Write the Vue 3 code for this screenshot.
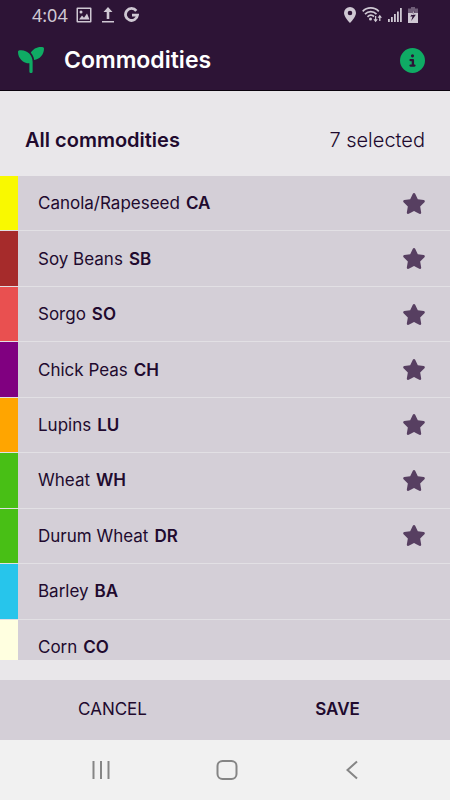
<script setup>
import { ref, computed } from 'vue'

const commodities = ref([
  { name: 'Canola/Rapeseed', code: 'CA', color: '#f9f900', selected: true },
  { name: 'Soy Beans', code: 'SB', color: '#a62b2b', selected: true },
  { name: 'Sorgo', code: 'SO', color: '#e95050', selected: true },
  { name: 'Chick Peas', code: 'CH', color: '#800080', selected: true },
  { name: 'Lupins', code: 'LU', color: '#ffa500', selected: true },
  { name: 'Wheat', code: 'WH', color: '#48bf15', selected: true },
  { name: 'Durum Wheat', code: 'DR', color: '#48bf15', selected: true },
  { name: 'Barley', code: 'BA', color: '#27c5eb', selected: false },
  { name: 'Corn', code: 'CO', color: '#ffffe0', selected: false },
])

const selectedCount = computed(() => commodities.value.filter((c) => c.selected).length)
</script>

<template>
  <div class="screen">
    <header class="top">
      <div class="status">
        <div class="status-group">
          <span class="time">4:04</span>
          <svg class="pic" width="16" height="16" viewBox="0 0 16 16" aria-hidden="true">
            <path fill-rule="evenodd" d="M1.500 0.500h13a1 1 0 0 1 1 1v13a1 1 0 0 1-1 1h-13a1 1 0 0 1-1-1v-13a1 1 0 0 1 1-1zM2 2v12h12V2zM3 12.500l3-4 2 2.300 3-4.300 2.500 6zM3.500 5a1.500 1.500 0 1 0 3 0 1.500 1.500 0 1 0-3 0z" />
          </svg>
          <svg class="upload" width="12" height="16" viewBox="0 0 12 16" aria-hidden="true">
            <path d="M6 0l4.500 5H7.300v7H4.700V5H1.500zM0 14h12v1.600H0z" />
          </svg>
          <svg width="15" height="16" viewBox="0 0 15 16" aria-hidden="true">
            <path d="M12.300 3.800A6 6 0 1 0 13.500 8.200H8" fill="none" stroke="#cfc8d3" stroke-width="2.800" />
          </svg>
        </div>
        <div class="status-group right">
          <svg width="12" height="16" viewBox="0 0 12 16" aria-hidden="true">
            <path fill-rule="evenodd" d="M6 0a6 6 0 0 1 6 6c0 4-6 10-6 10S0 10 0 6a6 6 0 0 1 6-6zM6 3.700a2.300 2.300 0 1 0 0 4.600 2.300 2.300 0 1 0 0-4.600z" />
          </svg>
          <svg class="wifi" width="20" height="16" viewBox="0 0 20 16" aria-hidden="true">
            <g fill="none" stroke="#cfc8d3" stroke-width="1.700">
              <path d="M0.700 4.300C5-0.300 12.500-0.300 16.800 4.300M3 7.200c3.300-3.400 8.200-3.400 11.500 0M5.500 9.800c2-2 4.500-2 6.500-0.300" />
              <path d="M13.600 9v5M17.800 14V9" stroke-width="1.300" />
            </g>
            <circle cx="8.500" cy="12" r="1.500" />
            <path d="M11.400 12.300h4.400l-2.200 3zM15.600 10.700H20l-2.200-3z" />
          </svg>
          <svg class="signal" width="14" height="14" viewBox="0 0 14 14" aria-hidden="true">
            <path d="M0 11h1.800v3H0zM3 9h1.800v5H3zM6 6h1.800v8H6zM9 3.500h1.800V14H9zM12 0h1.800v14H12z" />
          </svg>
          <svg class="battery" width="10" height="16" viewBox="0 0 10 16" aria-hidden="true">
            <path fill="#6f5c77" d="M3 0h4v1.500h3V8H0V1.500h3z" />
            <path d="M0 6h10v10H0z" />
            <path fill="#2d1436" d="M6.800 3.500L2.200 9.600h2.300L3.200 14l4.700-6.200H5.600z" />
            <path d="M6.200 3.800L3.200 8h2.500v-1.500z" />
          </svg>
        </div>
      </div>
      <div class="titlebar">
        <svg class="sprout" width="26" height="26" viewBox="0 0 512 512" aria-hidden="true">
          <path d="M512 32c0 113.600-84.600 207.500-194.200 222c-7.100-53.400-30.600-101.600-65.300-139.300C290.800 46.300 364 0 448 0h32c17.700 0 32 14.300 32 32zM0 96C0 78.300 14.300 64 32 64H64c123.700 0 224 100.300 224 224v32V480c0 17.700-14.300 32-32 32s-32-14.300-32-32V320C100.300 320 0 219.700 0 96z" />
        </svg>
        <h1>Commodities</h1>
        <button class="info" type="button" aria-label="Information">
          <svg width="25" height="25" viewBox="0 0 512 512" aria-hidden="true">
            <path d="M256 512A256 256 0 1 0 256 0a256 256 0 1 0 0 512zM216 336h24V272H216c-13.300 0-24-10.700-24-24s10.700-24 24-24h48c13.300 0 24 10.700 24 24v88h8c13.300 0 24 10.700 24 24s-10.700 24-24 24H216c-13.300 0-24-10.700-24-24s10.700-24 24-24zm40-208a32 32 0 1 1 0 64 32 32 0 1 1 0-64z" />
          </svg>
        </button>
      </div>
    </header>

    <main class="content">
      <div class="summary">
        <h2>All commodities</h2>
        <span>{{ selectedCount }} selected</span>
      </div>
      <div class="viewport">
        <ul class="list">
          <li v-for="item in commodities" :key="item.code">
            <span class="swatch" :style="{ background: item.color }"></span>
            <button class="row" type="button" :aria-pressed="item.selected" @click="item.selected = !item.selected">
              <span>{{ item.name }}</span>
              <strong>{{ item.code }}</strong>
              <svg v-if="item.selected" class="star" width="24" height="21" viewBox="0 0 576 512" aria-hidden="true">
                <path d="M316.900 18C311.600 7 300.400 0 288.100 0s-23.400 7-28.800 18L195 150.300 51.400 171.500c-12 1.800-22 10.200-25.700 21.700s-.7 24.200 7.900 32.700L137.800 329 113.200 474.700c-2 12 3 24.200 12.900 31.300s23 8 33.800 2.300l128.300-68.500 128.300 68.500c10.800 5.700 23.900 4.900 33.800-2.300s14.900-19.300 12.900-31.300L438.500 329 542.700 225.900c8.600-8.500 11.700-21.200 7.900-32.700s-13.700-19.900-25.700-21.700L381.200 150.300 316.900 18z" />
              </svg>
            </button>
          </li>
        </ul>
      </div>
    </main>

    <div class="actions">
      <button type="button">CANCEL</button>
      <button type="button" class="save">SAVE</button>
    </div>

    <nav class="system">
      <button type="button" aria-label="Recent apps">
        <svg width="20" height="20" viewBox="0 0 20 20" aria-hidden="true"><path d="M2.500 1v18M10 1v18M17.500 1v18" /></svg>
      </button>
      <button type="button" aria-label="Home">
        <svg width="22" height="20" viewBox="0 0 22 20" aria-hidden="true"><rect x="1.500" y="1" width="19" height="18" rx="5" /></svg>
      </button>
      <button type="button" aria-label="Back">
        <svg width="20" height="20" viewBox="0 0 20 20" aria-hidden="true"><path d="M15 1.500L5.500 10l9.500 8.500" /></svg>
      </button>
    </nav>
  </div>
</template>

<style>
body {
  margin: 0;
}
</style>

<style scoped>
.screen {
  display: flex;
  flex-direction: column;
  height: 100vh;
  overflow: hidden;
  background: #e9e7ea;
  color: #210a2e;
  font-family: Inter, Roboto, sans-serif;
  font-size: 17px;
}
button {
  margin: 0;
  padding: 0;
  border: 0;
  background: none;
  color: inherit;
  font: inherit;
  cursor: pointer;
}
svg {
  display: block;
  flex: none;
}
.top {
  flex: none;
  background: #2d1436;
  border-bottom: 1px solid #0b030e;
}
.status {
  display: flex;
  justify-content: space-between;
  height: 30px;
  padding: 0 32px;
  color: #cfc8d3;
  fill: #cfc8d3;
}
.status-group {
  display: flex;
  align-items: center;
}
.status-group.right {
  gap: 6px;
}
.time {
  font-family: "Noto Sans", sans-serif;
  font-size: 18px;
  line-height: 30px;
}
.pic {
  margin-left: 8px;
}
.upload {
  margin: 0 10px;
}
.titlebar {
  display: flex;
  align-items: center;
  height: 60px;
  padding: 0 25px 0 18px;
}
.sprout {
  fill: #0fab64;
}
h1 {
  margin: 0 0 0 20px;
  color: #fff;
  font-size: 23px;
  font-weight: 600;
}
.info {
  margin-left: auto;
  fill: #0fab64;
}
.content {
  flex: 1;
  display: flex;
  flex-direction: column;
  min-height: 0;
}
.summary {
  flex: none;
  display: flex;
  align-items: center;
  justify-content: space-between;
  box-sizing: border-box;
  height: 85px;
  padding: 12px 25px 0;
  font-size: 20px;
  font-weight: 300;
}
h2 {
  margin: 0;
  font-size: 20px;
  font-weight: 600;
}
.viewport {
  flex: 1;
  min-height: 0;
  overflow: hidden;
}
.list {
  display: grid;
  grid-auto-rows: 1fr;
  height: 499px;
  margin: 0;
  padding: 0;
  list-style: none;
}
li {
  display: flex;
  background: #d4cfd7;
  border-bottom: 1px solid #e2e0e4;
}
.swatch {
  flex: none;
  width: 18px;
}
.row {
  flex: 1;
  display: flex;
  align-items: center;
  gap: 6px;
  padding: 0 24px 0 20px;
  text-align: left;
}
strong {
  font-weight: 600;
}
.star {
  margin-left: auto;
  fill: #573f61;
}
.actions {
  flex: none;
  display: grid;
  grid-template-columns: 1fr 1fr;
  height: 60px;
  margin-top: 20px;
  padding: 0 0 2px;
  box-sizing: border-box;
  background: #d4cfd7;
}
.save {
  font-weight: 600;
}
.system {
  flex: none;
  display: flex;
  align-items: center;
  justify-content: space-between;
  height: 60px;
  padding: 0 88px 0 91px;
  background: #f1f1f1;
  fill: none;
  stroke: #858585;
  stroke-width: 2;
}
</style>
